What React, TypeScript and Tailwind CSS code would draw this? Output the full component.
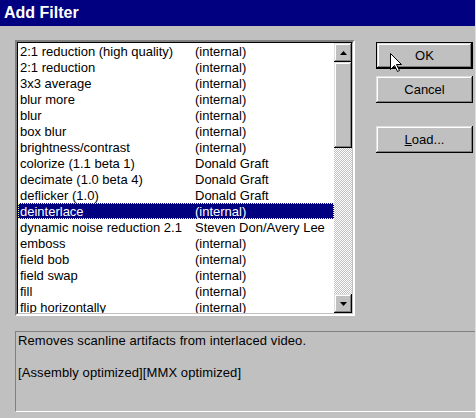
import React from 'react';

const filters: [string, string][] = [
  ['2:1 reduction (high quality)', '(internal)'],
  ['2:1 reduction', '(internal)'],
  ['3x3 average', '(internal)'],
  ['blur more', '(internal)'],
  ['blur', '(internal)'],
  ['box blur', '(internal)'],
  ['brightness/contrast', '(internal)'],
  ['colorize (1.1 beta 1)', 'Donald Graft'],
  ['decimate (1.0 beta 4)', 'Donald Graft'],
  ['deflicker (1.0)', 'Donald Graft'],
  ['deinterlace', '(internal)'],
  ['dynamic noise reduction 2.1', 'Steven Don/Avery Lee'],
  ['emboss', '(internal)'],
  ['field bob', '(internal)'],
  ['field swap', '(internal)'],
  ['fill', '(internal)'],
  ['flip horizontally', '(internal)'],
];

const raised =
  'bg-[#c0c0c0] shadow-[inset_-1px_-1px_#000,inset_1px_1px_#dfdfdf,inset_-2px_-2px_#808080,inset_2px_2px_#fff]';

const Arrow: React.FC<{ up?: boolean }> = ({ up }) => (
  <svg width="7" height="4" viewBox="0 0 7 4">
    {up ? <path d="M3.5 0 L7 4 L0 4 Z" fill="#000" /> : <path d="M0 0 L7 0 L3.5 4 Z" fill="#000" />}
  </svg>
);

const DialogButton: React.FC<{ children: React.ReactNode; isDefault?: boolean }> = ({ children, isDefault }) => (
  <div className={`w-[97px] h-[27px] ${isDefault ? 'border border-black' : ''}`}>
    <div className={`w-full h-full flex items-center justify-center text-[13px] text-black ${raised}`}>
      {children}
    </div>
  </div>
);

export default function App() {
  return (
    <div
      className="relative w-[476px] h-[418px] bg-[#c0c0c0] flex flex-col overflow-hidden border-r border-[#dfdfdf]"
      style={{ fontFamily: '"Liberation Sans", Arial, sans-serif' }}
    >
      {/* Title bar */}
      <div className="h-[26px] bg-[#000080] text-white font-bold text-[16px] pl-[4px] flex items-center shrink-0">
        Add Filter
      </div>

      <div className="flex pl-[15px] pt-[14px]">
        {/* Filter list */}
        <div className="w-[340px] h-[276px] border-2 border-t-[#808080] border-l-[#808080] border-b-white border-r-white">
          <div className="w-full h-full flex border border-t-black border-l-black border-b-[#c0c0c0] border-r-[#c0c0c0] bg-white">
            <div className="flex-1 overflow-hidden">
              {filters.map(([name, author]) => {
                const sel = name === 'deinterlace';
                return (
                  <div
                    key={name}
                    className={`h-[16px] flex items-center text-[13px] leading-none pl-[2px] ${
                      sel ? 'bg-[#000080] text-white outline outline-1 outline-dotted outline-[#ffff80] -outline-offset-1' : 'text-black'
                    }`}
                  >
                    <span className="w-[175px] shrink-0 whitespace-nowrap">{name}</span>
                    <span className="whitespace-nowrap">{author}</span>
                  </div>
                );
              })}
            </div>
            {/* Scrollbar */}
            <div className="w-[18px] flex flex-col bg-[repeating-conic-gradient(#fff_0_25%,#c0c0c0_0_50%)] bg-[length:2px_2px]">
              <div className={`h-[19px] shrink-0 flex items-center justify-center ${raised}`}>
                <Arrow up />
              </div>
              <div className={`h-[86px] shrink-0 ${raised}`} />
              <div className="flex-1" />
              <div className={`h-[19px] shrink-0 flex items-center justify-center ${raised}`}>
                <Arrow />
              </div>
            </div>
          </div>
        </div>

        {/* Buttons */}
        <div className="flex flex-col pl-[21px] pt-[2px] gap-[7px]">
          <DialogButton isDefault>OK</DialogButton>
          <DialogButton>Cancel</DialogButton>
          <div className="mt-[16px]">
            <DialogButton>
              <span>
                <span className="underline">L</span>oad...
              </span>
            </DialogButton>
          </div>
        </div>
      </div>

      {/* Description */}
      <div className="ml-[15px] mt-[15px] h-[81px] border-t border-l border-t-[#808080] border-l-[#808080] border-b border-b-white px-[2px] pt-[1px] text-[13px] leading-[16px] text-black tracking-[0.1px]">
        <div>Removes scanline artifacts from interlaced video.</div>
        <div>&nbsp;</div>
        <div>[Assembly optimized][MMX optimized]</div>
      </div>

      {/* Mouse cursor */}
      <svg className="absolute left-[390px] top-[53px]" width="12" height="20" viewBox="0 0 12 20">
        <path d="M0.5 0.5 L0.5 16.5 L4.5 12.5 L7.5 18.5 L9.5 17.5 L6.5 11.5 L11.5 11.5 Z" fill="#fff" stroke="#000" strokeWidth="1" />
      </svg>
    </div>
  );
}
